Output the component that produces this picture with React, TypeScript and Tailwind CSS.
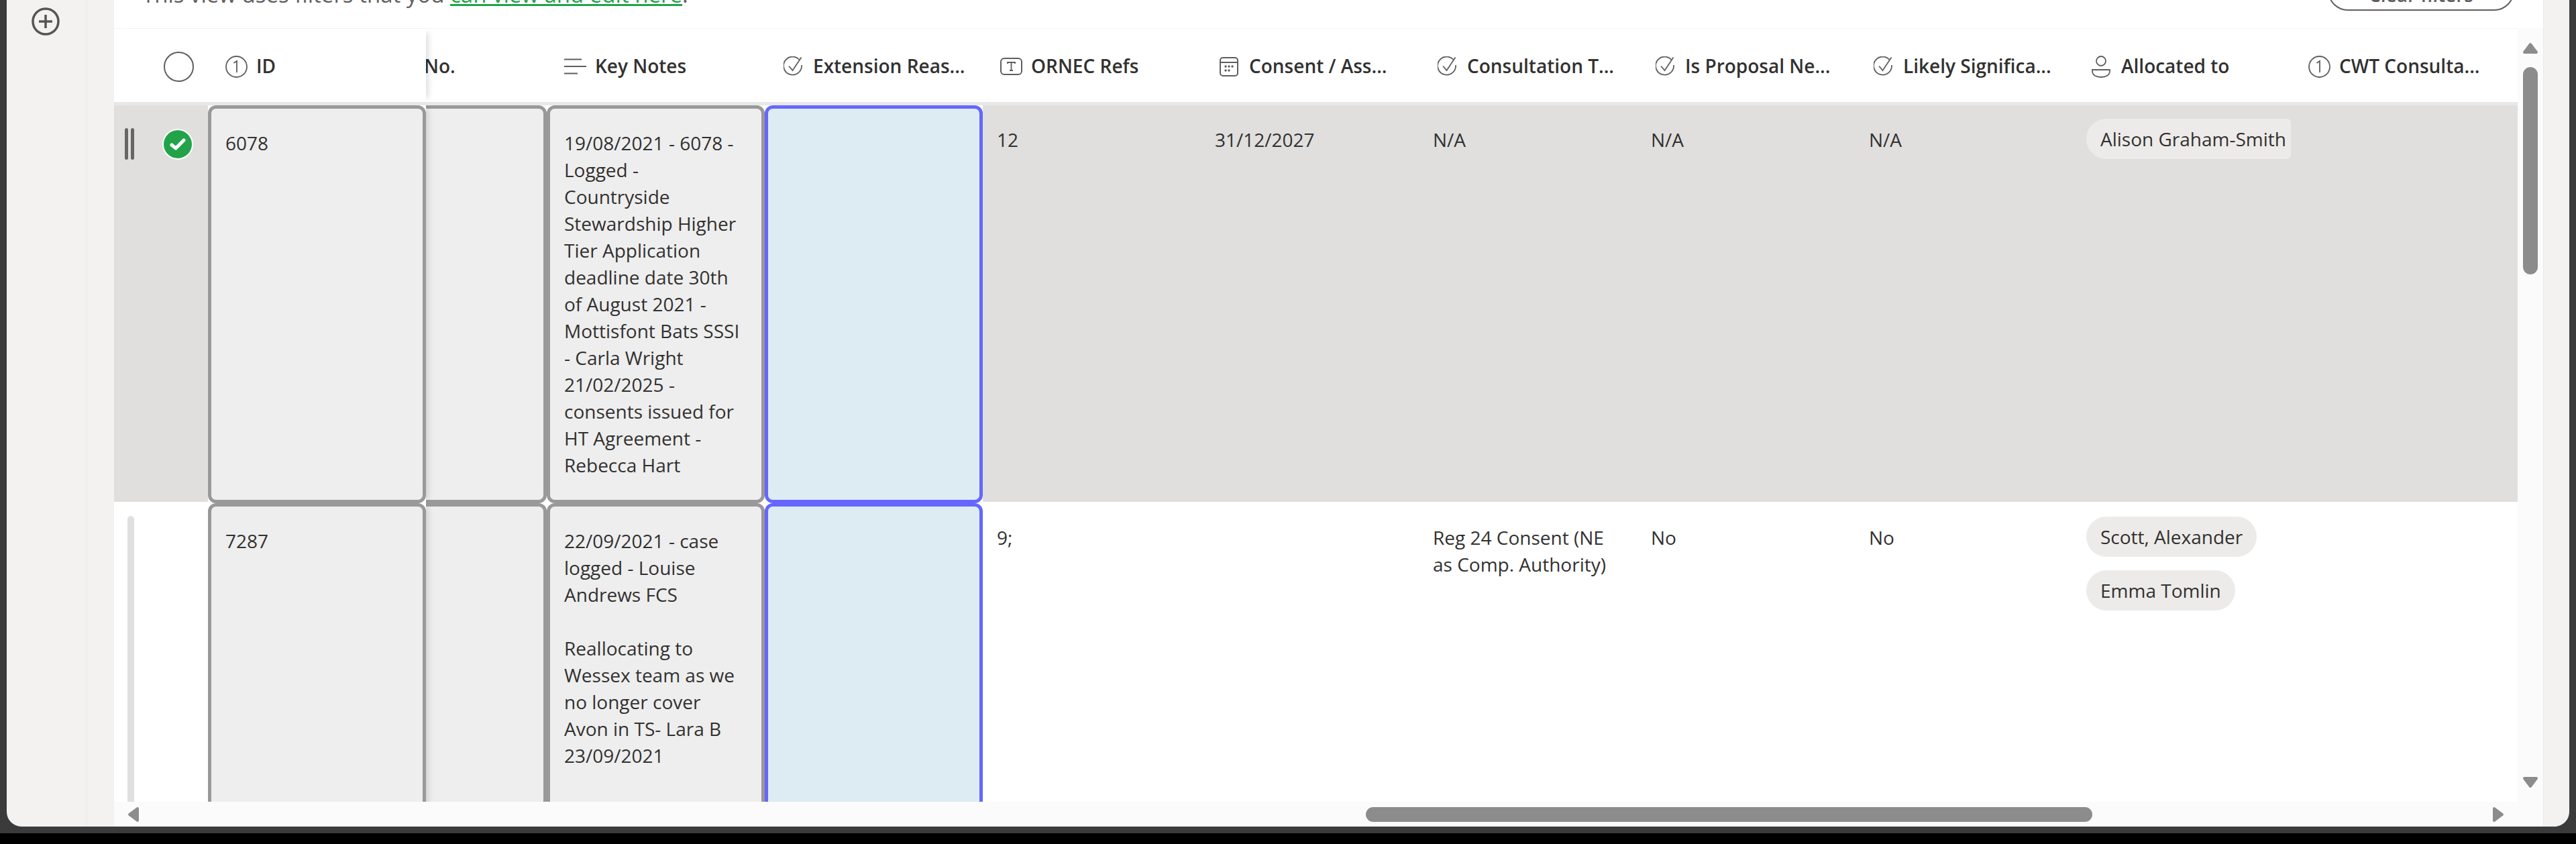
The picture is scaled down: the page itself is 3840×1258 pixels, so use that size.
import React from "react";

const NumberIcon = () => (
  <svg width="33" height="33" viewBox="0 0 33 33" fill="none" stroke="#605e5c" strokeWidth="1.8">
    <circle cx="16.5" cy="16.5" r="15.5" />
    <path d="M12.5 11 L17 8 V25" />
  </svg>
);

const CheckIcon = () => (
  <svg width="30" height="30" viewBox="0 0 30 30" fill="none" stroke="#605e5c" strokeWidth="1.8" className="ml-[2px]">
    <path d="M24 5.5 A13.5 13.5 0 1 0 27 13" />
    <path d="M8 14.5 L13.5 21 L26.5 1.5" />
  </svg>
);

const TextIcon = () => (
  <svg width="33" height="26" viewBox="0 0 33 26" fill="none" stroke="#605e5c" strokeWidth="2">
    <rect x="1" y="1" width="31" height="24" rx="5" />
    <path d="M11 9 V7 H22 V9 M16.5 7 V19 M14 19 H19" strokeWidth="1.8" />
  </svg>
);

const CalendarIcon = () => (
  <svg width="28" height="29" viewBox="0 0 28 29" fill="none" stroke="#605e5c" strokeWidth="2" className="ml-[2px]">
    <rect x="1" y="1" width="26" height="27" rx="4" />
    <path d="M1 8 H27" />
    <g fill="#605e5c" stroke="none">
      <circle cx="9" cy="14" r="1.7" />
      <circle cx="14" cy="14" r="1.7" />
      <circle cx="19" cy="14" r="1.7" />
      <circle cx="9" cy="20" r="1.7" />
      <circle cx="14" cy="20" r="1.7" />
    </g>
  </svg>
);

const PersonIcon = () => (
  <svg width="28" height="33" viewBox="0 0 28 33" fill="none" stroke="#605e5c" strokeWidth="1.8" className="ml-[2px]">
    <ellipse cx="14" cy="8" rx="7" ry="7" />
    <path d="M1 21 H27 V23 C27 29 21 32 14 32 C7 32 1 29 1 23 Z" />
  </svg>
);

const NotesIcon = () => (
  <svg width="33" height="24" viewBox="0 0 33 24" fill="none" stroke="#605e5c" strokeWidth="2">
    <path d="M0 1.5 H26 M0 12 H33 M0 22.5 H20" />
  </svg>
);

const Triangle = ({ points, w, h }: { points: string; w: number; h: number }) => (
  <svg width={w} height={h} viewBox={`0 0 ${w} ${h}`} className="shrink-0">
    <polygon points={points} fill="#8c8c8c" stroke="#8c8c8c" strokeWidth="4" strokeLinejoin="round" />
  </svg>
);

const headers = [
  { label: "ORNEC Refs", icon: <TextIcon /> },
  { label: "Consent / Ass...", icon: <CalendarIcon /> },
  { label: "Consultation T...", icon: <CheckIcon /> },
  { label: "Is Proposal Ne...", icon: <CheckIcon /> },
  { label: "Likely Significa...", icon: <CheckIcon /> },
  { label: "Allocated to", icon: <PersonIcon /> },
  { label: "CWT Consulta...", icon: <NumberIcon /> },
];

const HeaderCell = ({ label, icon }: { label: string; icon: React.ReactNode }) => (
  <div className="flex h-full w-[325px] shrink-0 items-center pl-[26px]">
    <div className="mt-[3px] flex w-[46px] shrink-0 items-center">{icon}</div>
    <span className="font-semibold whitespace-nowrap">{label}</span>
  </div>
);

const EditCell = ({ lines, pt, blue, h }: { lines: string[]; pt: string; blue?: boolean; h: string }) => (
  <div className={`w-[325px] shrink-0 bg-white ${h}`}>
    <div
      className={`h-full rounded-[12px] border-[5px] pl-[21px] ${pt} ${
        blue ? "border-[#6666ff] bg-[#dcecf2]" : "border-[#999999] bg-[#eeeeee]"
      }`}
    >
      {lines.map((line, i) => (
        <div key={i} className="h-[40px] whitespace-nowrap">
          {line}
        </div>
      ))}
    </div>
  </div>
);

const NoCell = ({ h }: { h: string }) => (
  <div className={`w-[180px] shrink-0 bg-white ${h}`}>
    <div className="h-full rounded-r-[12px] border-y-[5px] border-r-[5px] border-[#999999] bg-[#eeeeee]" />
  </div>
);

const Pill = ({ children, className = "" }: { children: React.ReactNode; className?: string }) => (
  <div className={`flex h-[60px] items-center whitespace-nowrap bg-[#edebe9] px-[21px] ${className}`}>{children}</div>
);

const note1 = [
  "19/08/2021 - 6078 -",
  "Logged -",
  "Countryside",
  "Stewardship Higher",
  "Tier Application",
  "deadline date 30th",
  "of August 2021 -",
  "Mottisfont Bats SSSI",
  "- Carla Wright",
  "21/02/2025 -",
  "consents issued for",
  "HT Agreement -",
  "Rebecca Hart",
];

const note2 = [
  "22/09/2021 - case",
  "logged - Louise",
  "Andrews FCS",
  "",
  "Reallocating to",
  "Wessex team as we",
  "no longer cover",
  "Avon in TS- Lara B",
  "23/09/2021",
];

const row1Values = ["12", "31/12/2027", "N/A", "N/A", "N/A"];

export default function App() {
  return (
    <div className="h-[1258px] w-[3840px] overflow-hidden bg-black font-['Open_Sans',sans-serif] text-[28px] leading-[40px] text-[#323130]">
      <div className="h-[1242px] bg-[#3b3b3b] px-[10px] pb-[10px]">
        <div className="flex h-full overflow-hidden rounded-b-[22px] bg-[#f3f2f1]">
          {/* left rail */}
          <div className="flex w-[120px] shrink-0 justify-center border-r border-[#ecebea] pt-[11px]">
            <svg width="42" height="42" viewBox="0 0 42 42" fill="none" stroke="#555555" strokeWidth="3.5" className="mr-[4px]">
              <circle cx="21" cy="21" r="19" />
              <path d="M21 11 V31 M11 21 H31" />
            </svg>
          </div>
          <div className="w-[40px] shrink-0" />

          {/* main panel */}
          <div className="flex w-[3621px] shrink-0 flex-col bg-white">
            <div className="flex h-[42px] shrink-0 items-start justify-between overflow-hidden pl-[42px] pr-[43px]">
              <div className="-mt-[28px] whitespace-nowrap text-[33px] text-[#605e5c]">
                This view uses filters that you{" "}
                <span className="text-[#22a34a] underline decoration-[3px] underline-offset-[2px]">can view and edit here</span>.
              </div>
              <div className="-mt-[44px] flex h-[60px] w-[278px] items-center justify-center rounded-full border-[2.5px] border-[#605e5c] pt-[12px] font-semibold text-[#605e5c]">
                Clear filters
              </div>
            </div>

            <div className="flex min-h-0 flex-1">
              <div className="flex w-[3583px] shrink-0 flex-col overflow-hidden">
                {/* header */}
                <div className="flex h-[115px] shrink-0 items-center border-t border-[#f3f3f3] border-b-[5px] border-b-[#e8e8e8]">
                  <div className="relative z-10 flex h-full w-[465px] shrink-0 items-center bg-white shadow-[10px_0_8px_-6px_rgba(0,0,0,0.12)]">
                    <div className="mt-[3px] flex w-[140px] shrink-0 justify-end pr-[21px]">
                      <div className="size-[45px] rounded-full border-2 border-[#605e5c]" />
                    </div>
                    <HeaderCell label="ID" icon={<NumberIcon />} />
                  </div>
                  <div className="flex h-full w-[180px] shrink-0 items-center overflow-hidden">
                    <span className="-ml-[3px] font-semibold">No.</span>
                  </div>
                  <HeaderCell label="Key Notes" icon={<NotesIcon />} />
                  <HeaderCell label="Extension Reas..." icon={<CheckIcon />} />
                  {headers.map((h) => (
                    <HeaderCell key={h.label} label={h.label} icon={h.icon} />
                  ))}
                </div>

                {/* row 1 */}
                <div className="flex h-[593px] shrink-0 items-start">
                  <div className="relative z-10 flex h-[593px] w-[465px] shrink-0 items-start bg-white shadow-[10px_0_8px_-6px_rgba(0,0,0,0.12)]">
                    <div className="flex h-[591px] w-[140px] shrink-0 items-start bg-[#e0dfde] pl-[16px] pt-[34px]">
                      <div className="h-[47px] w-[5px] rounded-full bg-[#666666]" />
                      <div className="ml-[4px] h-[47px] w-[5px] rounded-full bg-[#666666]" />
                      <div className="ml-[42px] mt-[1px] flex size-[46px] items-center justify-center rounded-full border-2 border-white bg-[#22a34a]">
                        <svg width="24" height="20" viewBox="0 0 24 20" fill="none" stroke="white" strokeWidth="5" strokeLinecap="round" strokeLinejoin="round">
                          <path d="M3 11 L9 16 L21 4" />
                        </svg>
                      </div>
                    </div>
                    <EditCell lines={["6078"]} pt="pt-[31px]" h="h-[593px]" />
                  </div>
                  <NoCell h="h-[593px]" />
                  <EditCell lines={note1} pt="pt-[31px]" h="h-[593px]" />
                  <EditCell lines={[]} pt="" blue h="h-[593px]" />
                  <div className="flex h-[591px] flex-1 bg-[#e0dfde]">
                    {row1Values.map((v, i) => (
                      <div key={i} className="w-[325px] shrink-0 pl-[21px] pt-[31px]">
                        {v}
                      </div>
                    ))}
                    <div className="w-[325px] shrink-0 pl-[20px] pt-[20px]">
                      <Pill className="w-[305px] rounded-l-[30px] rounded-r-[6px]">Alison Graham-Smith</Pill>
                    </div>
                  </div>
                </div>

                {/* row 2 */}
                <div className="flex h-[600px] shrink-0 items-start">
                  <div className="relative z-10 flex h-[600px] w-[465px] shrink-0 items-start bg-white shadow-[10px_0_8px_-6px_rgba(0,0,0,0.12)]">
                    <div className="w-[140px] shrink-0 pl-[20px] pt-[19px]">
                      <div className="h-[500px] w-[10px] rounded-full bg-[#e0e0e0]" />
                    </div>
                    <EditCell lines={["7287"]} pt="pt-[31px]" h="h-[600px]" />
                  </div>
                  <NoCell h="h-[600px]" />
                  <EditCell lines={note2} pt="pt-[31px]" h="h-[600px]" />
                  <EditCell lines={[]} pt="" blue h="h-[600px]" />
                  <div className="w-[325px] shrink-0 pl-[21px] pt-[31px]">9;</div>
                  <div className="w-[325px] shrink-0" />
                  <div className="w-[325px] shrink-0 pl-[21px] pt-[31px]">
                    <div>Reg 24 Consent (NE</div>
                    <div>as Comp. Authority)</div>
                  </div>
                  <div className="w-[325px] shrink-0 pl-[21px] pt-[31px]">No</div>
                  <div className="w-[325px] shrink-0 pl-[21px] pt-[31px]">No</div>
                  <div className="flex w-[325px] shrink-0 flex-col items-start gap-[20px] pl-[20px] pt-[20px]">
                    <Pill className="rounded-full">Scott, Alexander</Pill>
                    <Pill className="rounded-full">Emma Tomlin</Pill>
                  </div>
                </div>
              </div>

              {/* vertical scrollbar */}
              <div className="flex w-[38px] shrink-0 flex-col items-center bg-[#fbfbfb] pt-[21px]">
                <Triangle w={24} h={18} points="12,3 21,15 3,15" />
                <div className="mt-[19px] h-[309px] w-[22px] rounded-full bg-[#8c8c8c]" />
                <div className="mt-auto mb-[20px]">
                  <Triangle w={24} h={18} points="3,3 21,3 12,15" />
                </div>
              </div>
            </div>

            {/* horizontal scrollbar */}
            <div className="flex h-[37px] shrink-0 items-center bg-[#fbfbfb] pl-[20px]">
              <Triangle w={18} h={24} points="15,3 15,21 3,12" />
              <div className="ml-[1828px] h-[22px] w-[1083px] rounded-full bg-[#8c8c8c]" />
              <div className="ml-[596px]">
                <Triangle w={18} h={24} points="3,3 15,12 3,21" />
              </div>
            </div>
          </div>

          <div className="flex-1 border-l border-[#ebeaea]" />
        </div>
      </div>
    </div>
  );
}
